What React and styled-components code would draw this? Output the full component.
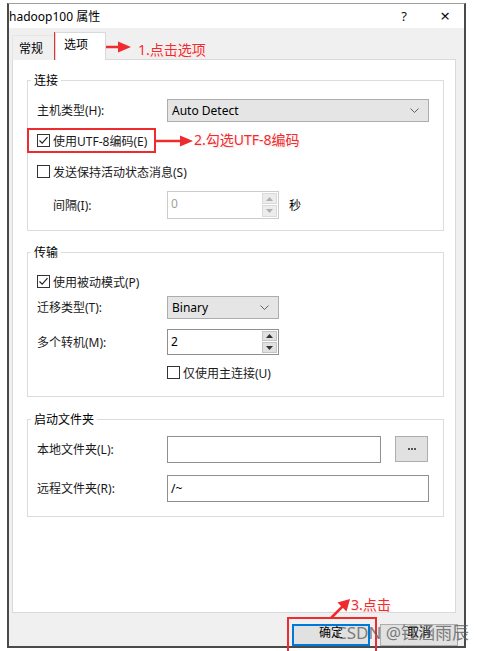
import React from "react";
import styled, { createGlobalStyle } from "styled-components";

const GlobalStyle = createGlobalStyle`
  body {
    margin: 0;
    background: #fff;
    font-family: "Noto Sans", "Noto Sans CJK SC", sans-serif;
    font-size: 12px;
    color: #1a1a1a;
  }
  * { box-sizing: border-box; }
`;

const RED = "#ee2b2f";

const Stage = styled.div`
  position: relative;
  width: 488px;
  height: 651px;
  overflow: hidden;
  padding: 3px 0 0 7px;
`;

const Window = styled.div`
  width: 459px;
  height: 645px;
  background: #f0f0f0;
  border-top: 1px solid #a0a0a0;
  border-left: 2px solid #4a4a4a;
  border-right: 2px solid #4a4a4a;
  border-bottom: 2px solid #4a4a4a;
  display: flex;
  flex-direction: column;
  overflow: hidden;
`;

const TitleBar = styled.div`
  height: 24px;
  background: #fff;
  display: flex;
  align-items: center;
  padding-right: 2px;

  .title {
    flex: 1;
    font-size: 12px;
    color: #000;
  }
`;

const CaptionButton = styled.div`
  width: ${(p) => p.$w}px;
  margin-left: ${(p) => p.$ml || 0}px;
  display: flex;
  justify-content: center;
  align-items: center;
  font-size: ${(p) => p.$size}px;
  color: #111;
`;

const TabStrip = styled.div`
  height: 32px;
  margin-bottom: -1px;
  padding-left: 3px;
  display: flex;
  align-items: flex-end;
`;

const Tab = styled.div`
  position: relative;
  z-index: ${(p) => (p.$active ? 1 : 0)};
  width: ${(p) => p.$w}px;
  height: ${(p) => (p.$active ? 28 : 25)}px;
  padding: ${(p) => (p.$active ? "4px 0 0 8px" : "5px 0 0 6px")};
  background: ${(p) => (p.$active ? "#fff" : "#f0f0f0")};
  border: 1px solid ${(p) => (p.$active ? "#d9d9d9" : "#e6e6e6")};
  border-bottom: none;
  line-height: 16px;
  color: #000;
`;

const Panel = styled.div`
  height: 555px;
  margin: 0 8px 0 3px;
  background: #fff;
  border: 1px solid #d9d9d9;
  padding: 13px 11px 0 14px;
`;

const Group = styled.fieldset`
  margin: ${(p) => p.$mt || 0}px 0 0 0;
  padding: 0 14px ${(p) => p.$pb}px 9px;
  border: 1px solid #dcdcdc;
  min-width: 0;

  legend {
    margin-left: -6px;
    padding: 0 3px;
    line-height: 16px;
    font-size: 12px;
    color: #000;
  }
`;

const Row = styled.div`
  display: flex;
  align-items: center;
  height: ${(p) => p.$h}px;
  margin-top: ${(p) => p.$mt}px;
  padding-left: ${(p) => p.$indent || 0}px;
`;

const Label = styled.div`
  width: 130px;
  padding-left: ${(p) => p.$indent || 0}px;
  flex-shrink: 0;
  color: #1a1a1a;
`;

const Combo = styled.div`
  width: ${(p) => p.$w}px;
  height: 100%;
  background: #e5e5e5;
  border: 1px solid #adadad;
  display: flex;
  align-items: center;
  justify-content: space-between;
  padding: 0 9px 0 4px;
  color: #000;
`;

const Field = styled.div`
  width: ${(p) => p.$w}px;
  height: 100%;
  background: #fff;
  border: 1px solid ${(p) => (p.$disabled ? "#cccccc" : "#8f8f8f")};
  display: flex;
  align-items: center;
  padding: 0 0 0 3px;
  color: ${(p) => (p.$disabled ? "#a0a0a0" : "#000")};
`;

const SpinBox = styled(Field)`
  align-items: stretch;
  padding: 0;

  .value {
    flex: 1;
    padding: 3px 0 0 3px;
  }
`;

const SpinButtons = styled.div`
  width: 15px;
  margin: 1px;
  display: flex;
  flex-direction: column;
  gap: 1px;
`;

const SpinHalf = styled.div`
  flex: 1;
  background: ${(p) => (p.$disabled ? "#ececec" : "#e1e1e1")};
  border: 1px solid ${(p) => (p.$disabled ? "#dadada" : "#c4c4c4")};
  display: flex;
  align-items: center;
  justify-content: center;
`;

const BrowseButton = styled.div`
  width: 33px;
  height: 26px;
  margin-left: 14px;
  background: #e1e1e1;
  border: 1px solid #adadad;
  display: flex;
  align-items: center;
  justify-content: center;
  gap: 1px;

  i {
    width: 2px;
    height: 2px;
    background: #555;
  }
`;

const Unit = styled.span`
  margin-left: 10px;
  color: #000;
`;

const CheckWrap = styled.div`
  display: flex;
  align-items: center;
  gap: 3px;
  color: #1a1a1a;
`;

const Box = styled.span`
  width: 13px;
  height: 13px;
  border: 1px solid #333;
  background: #fff;
  display: flex;
  align-items: center;
  justify-content: center;
`;

const Footer = styled.div`
  flex: 1;
  display: flex;
  justify-content: flex-end;
  gap: 10px;
  padding: 11px 6px 0 0;
`;

const DialogButton = styled.div`
  width: 78px;
  height: 22px;
  background: #e1e1e1;
  border: ${(p) => (p.$default ? "2px solid #0078d7" : "1px solid #adadad")};
  text-align: center;
  line-height: 14px;
  padding-top: ${(p) => (p.$default ? 0 : 1)}px;
  color: #000;
`;

/* annotation overlays */
const Mark = styled.div`
  position: absolute;
  left: ${(p) => p.$x}px;
  top: ${(p) => p.$y}px;
  width: ${(p) => p.$w}px;
  height: ${(p) => p.$h}px;
  border: 2px solid ${RED};
`;

const Note = styled.div`
  position: absolute;
  left: ${(p) => p.$x}px;
  top: ${(p) => p.$y}px;
  font-size: 14px;
  line-height: 18px;
  color: ${RED};
  white-space: nowrap;
  text-shadow: 0 0 2px #fff, 0 0 2px #fff, 1px 1px 1px #ffd0d0;
`;

const Arrow = styled.svg`
  position: absolute;
  left: ${(p) => p.$x}px;
  top: ${(p) => p.$y}px;
  overflow: visible;
`;

const Watermark = styled.div`
  position: absolute;
  left: 336px;
  top: 622px;
  font-size: 17px;
  line-height: 22px;
  color: rgba(95, 95, 95, 0.8);
  white-space: nowrap;
`;

const Chevron = () => (
  <svg width="9" height="5" viewBox="0 0 9 5">
    <path d="M0.5 0.5 L4.5 4.5 L8.5 0.5" fill="none" stroke="#606060" strokeWidth="1" />
  </svg>
);

const Tri = ({ down, disabled }) => (
  <svg width="7" height="4" viewBox="0 0 7 4">
    <path d={down ? "M0 0 H7 L3.5 4 Z" : "M0 4 H7 L3.5 0 Z"} fill={disabled ? "#b0b0b0" : "#333"} />
  </svg>
);

const Checkbox = ({ checked, children }) => (
  <CheckWrap>
    <Box>
      {checked && (
        <svg width="11" height="11" viewBox="0 0 11 11">
          <path d="M1.5 5.5 L4.2 8.2 L9.5 2.2" fill="none" stroke="#222" strokeWidth="1.2" />
        </svg>
      )}
    </Box>
    {children}
  </CheckWrap>
);

const Spinner = ({ w, value, disabled }) => (
  <SpinBox $w={w} $disabled={disabled}>
    <span className="value">{value}</span>
    <SpinButtons>
      <SpinHalf $disabled={disabled}>
        <Tri disabled={disabled} />
      </SpinHalf>
      <SpinHalf $disabled={disabled}>
        <Tri down disabled={disabled} />
      </SpinHalf>
    </SpinButtons>
  </SpinBox>
);

const App = () => {
  return (
    <Stage>
      <GlobalStyle />
      <Window>
        <TitleBar>
          <span className="title">hadoop100 属性</span>
          <CaptionButton $w={36} $size={13}>
            ?
          </CaptionButton>
          <CaptionButton $w={34} $ml={6} $size={17}>
            ×
          </CaptionButton>
        </TitleBar>

        <TabStrip>
          <Tab $w={43}>常规</Tab>
          <Tab $w={51} $active>
            选项
          </Tab>
        </TabStrip>

        <Panel>
          <Group $pb={11}>
            <legend>连接</legend>
            <Row $h={23} $mt={10}>
              <Label>主机类型(H):</Label>
              <Combo $w={262}>
                <span>Auto Detect</span>
                <Chevron />
              </Combo>
            </Row>
            <Row $h={20} $mt={9}>
              <Checkbox checked>使用UTF-8编码(E)</Checkbox>
            </Row>
            <Row $h={20} $mt={11}>
              <Checkbox>发送保持活动状态消息(S)</Checkbox>
            </Row>
            <Row $h={28} $mt={9}>
              <Label $indent={16}>间隔(I):</Label>
              <Spinner w={112} value="0" disabled />
              <Unit>秒</Unit>
            </Row>
          </Group>

          <Group $mt={14} $pb={13}>
            <legend>传输</legend>
            <Row $h={20} $mt={11}>
              <Checkbox checked>使用被动模式(P)</Checkbox>
            </Row>
            <Row $h={23} $mt={4}>
              <Label>迁移类型(T):</Label>
              <Combo $w={112}>
                <span>Binary</span>
                <Chevron />
              </Combo>
            </Row>
            <Row $h={26} $mt={10}>
              <Label>多个转机(M):</Label>
              <Spinner w={112} value="2" />
            </Row>
            <Row $h={20} $mt={8} $indent={130}>
              <Checkbox>仅使用主连接(U)</Checkbox>
            </Row>
          </Group>

          <Group $mt={15} $pb={14}>
            <legend>启动文件夹</legend>
            <Row $h={27} $mt={8}>
              <Label>本地文件夹(L):</Label>
              <Field $w={214} />
              <BrowseButton title="...">
                <i />
                <i />
                <i />
              </BrowseButton>
            </Row>
            <Row $h={27} $mt={12}>
              <Label>远程文件夹(R):</Label>
              <Field $w={262}>/~</Field>
            </Row>
          </Group>
        </Panel>

        <Footer>
          <DialogButton $default>确定</DialogButton>
          <DialogButton>取消</DialogButton>
        </Footer>
      </Window>

      <Mark $x={54} $y={32} $w={52} $h={28} />
      <Arrow $x={106} $y={41} width="26" height="12" viewBox="0 0 26 12">
        <path d="M0 6 H14" stroke={RED} strokeWidth="2.5" />
        <path d="M12 0.5 L25 6 L12 11.5 Z" fill={RED} />
      </Arrow>
      <Note $x={138} $y={41}>1.点击选项</Note>

      <Mark $x={27} $y={128} $w={129} $h={25} />
      <Arrow $x={156} $y={135} width="38" height="12" viewBox="0 0 38 12">
        <path d="M0 6 H26" stroke={RED} strokeWidth="2.5" />
        <path d="M24 0.5 L37 6 L24 11.5 Z" fill={RED} />
      </Arrow>
      <Note $x={194} $y={131}>2.勾选UTF-8编码</Note>

      <Mark $x={287} $y={617} $w={90} $h={40} />
      <Arrow $x={329} $y={598} width="22" height="22" viewBox="0 0 22 22">
        <path d="M2 20 L14 8" stroke={RED} strokeWidth="2.5" />
        <path d="M21 1 L17.5 13.5 L8.5 4.5 Z" fill={RED} />
      </Arrow>
      <Note $x={351} $y={596}>3.点击</Note>

      <Watermark>CSDN @钰涵雨辰</Watermark>
    </Stage>
  );
};

export default App;
